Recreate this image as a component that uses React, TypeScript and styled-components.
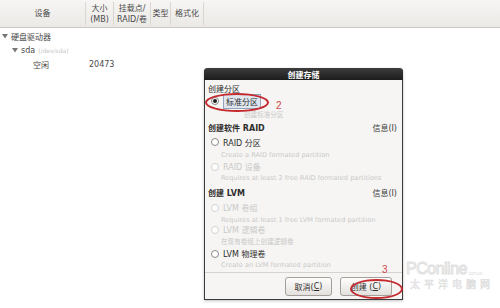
import React from "react";
import styled, { createGlobalStyle } from "styled-components";

const GlobalStyle = createGlobalStyle`
  html, body { margin: 0; padding: 0; background: #ffffff; }
  body { font-family: "DejaVu Sans", "Noto Sans CJK SC", sans-serif; }
`;

const FONT = `"DejaVu Sans", "Noto Sans CJK SC", sans-serif`;

const Page = styled.div`
  position: relative;
  width: 500px;
  height: 308px;
  overflow: hidden;
  background: #ffffff;
  font-family: ${FONT};
`;

const Header = styled.div`
  display: flex;
  height: 27px;
  background: linear-gradient(#f7f6f4, #ebe9e6);
  border-bottom: 1px solid #cbc8c4;
`;

const HeadCell = styled.div<{ $w?: number }>`
  ${(p) => (p.$w ? `width: ${p.$w}px;` : "flex: 1;")}
  display: flex;
  align-items: center;
  justify-content: center;
  text-align: center;
  font-size: 8px;
  line-height: 11px;
  color: #4a4a4a;
  border-right: ${(p) => (p.$w ? "1px solid #d9d6d2" : "none")};
  box-sizing: border-box;
  margin: 2px 0;
`;

const Tree = styled.div`
  display: flex;
  flex-direction: column;
  padding-top: 1px;
`;

const TreeRow = styled.div<{ $indent: number }>`
  display: flex;
  align-items: center;
  height: 14px;
  padding-left: ${(p) => p.$indent}px;
  font-size: 8px;
  color: #4a4a4a;
  gap: 3px;
`;

const Dim = styled.span`
  color: #c4c4c4;
  font-size: 6px;
`;

const Cell = styled.span<{ $w: number }>`
  display: inline-block;
  width: ${(p) => p.$w}px;
`;

const Arrow = () => (
  <svg width="6" height="5" viewBox="0 0 6 5">
    <path d="M0 0 L6 0 L3 4.5 Z" fill="#777" />
  </svg>
);

const Dialog = styled.div`
  position: absolute;
  left: 204px;
  top: 68px;
  width: 199px;
  height: 232px;
  box-sizing: border-box;
  display: flex;
  flex-direction: column;
  background: #f6f5f3;
  border: 1px solid #3a3a3a;
  border-top: none;
  border-radius: 4px 4px 0 0;
  box-shadow: 0 1px 3px rgba(0, 0, 0, 0.25);
`;

const TitleBar = styled.div`
  height: 12px;
  margin: 0 -1px;
  border-radius: 4px 4px 0 0;
  background: linear-gradient(#3d3d3d, #1c1c1c);
  color: #ffffff;
  font-weight: bold;
  font-size: 8px;
  display: flex;
  align-items: center;
  justify-content: center;
`;

const Body = styled.div`
  display: flex;
  flex-direction: column;
  padding: 2px 5px 0 3px;
`;

const Row = styled.div<{ $h: number; $indent?: number; $faint?: boolean; $bold?: boolean; $small?: boolean }>`
  display: flex;
  align-items: center;
  height: ${(p) => p.$h}px;
  padding-left: ${(p) => p.$indent ?? 0}px;
  font-size: ${(p) => (p.$small ? "6.6px" : "8px")};
  font-weight: ${(p) => (p.$bold ? "bold" : "normal")};
  color: ${(p) => (p.$faint ? "#c9c9c9" : "#2e2e2e")};
  white-space: nowrap;
  gap: 4px;
`;

const Info = styled.span`
  margin-left: auto;
  font-weight: normal;
  color: #3a3a3a;
`;

const Radio = styled.span<{ $checked?: boolean; $faint?: boolean }>`
  width: 6px;
  height: 6px;
  border-radius: 50%;
  border: 1px solid ${(p) => (p.$faint ? "#d2d2d2" : "#8a8a8a")};
  background: #ffffff;
  display: inline-flex;
  align-items: center;
  justify-content: center;
  flex: none;
  &::after {
    content: "";
    width: 4px;
    height: 4px;
    border-radius: 50%;
    background: ${(p) => (p.$checked ? "#1e1e1e" : "transparent")};
  }
`;

const Focus = styled.span`
  padding: 1px 2px;
  border: 1px solid #93a6bd;
  background: #dfe6ee;
`;

const Separator = styled.div`
  margin-top: 3px;
  height: 1px;
  background: #d6d3cf;
  margin-left: -3px;
  margin-right: -5px;
`;

const ButtonBar = styled.div`
  display: flex;
  justify-content: flex-end;
  gap: 8px;
  padding: 4px 5px 0 0;
`;

const Button = styled.div<{ $w: number }>`
  width: ${(p) => p.$w}px;
  height: 19px;
  box-sizing: border-box;
  border: 1px solid #a3a09c;
  border-radius: 3px;
  background: linear-gradient(#fdfdfc, #e4e1dd);
  font-size: 8px;
  color: #2e2e2e;
  display: flex;
  align-items: center;
  justify-content: center;
  u { text-decoration: underline; }
`;

const Ellipse = styled.div<{ $l: number; $t: number; $w: number; $h: number }>`
  position: absolute;
  left: ${(p) => p.$l}px;
  top: ${(p) => p.$t}px;
  width: ${(p) => p.$w}px;
  height: ${(p) => p.$h}px;
  box-sizing: border-box;
  border: 2px solid #c42a2f;
  border-radius: 50%;
  pointer-events: none;
`;

const Mark = styled.div<{ $l: number; $t: number }>`
  position: absolute;
  left: ${(p) => p.$l}px;
  top: ${(p) => p.$t}px;
  color: #d0484a;
  font-family: "Liberation Sans", sans-serif;
  font-size: 10px;
`;

const Watermark = styled.div`
  position: absolute;
  left: 406px;
  top: 260px;
  display: flex;
  flex-direction: column;
  align-items: flex-start;
  pointer-events: none;
`;

const WmLogo = styled.div`
  font-family: "Liberation Sans", sans-serif;
  font-size: 16px;
  letter-spacing: -0.5px;
  line-height: 17px;
  color: transparent;
  -webkit-text-stroke: 1px #e0e0e0;
  display: flex;
  align-items: flex-end;
  span {
    font-size: 5px;
    line-height: 7px;
    -webkit-text-stroke: 0;
    color: #dedede;
    margin-left: 1px;
  }
`;

const WmCn = styled.div`
  font-family: "Noto Sans CJK SC", sans-serif;
  font-size: 10px;
  line-height: 13px;
  letter-spacing: 4px;
  padding-left: 4px;
  color: transparent;
  -webkit-text-stroke: 0.6px #dddddd;
`;

export default function App() {
  return (
    <Page>
      <GlobalStyle />
      <Header>
        <HeadCell $w={86}>设备</HeadCell>
        <HeadCell $w={28}>
          大小
          <br />
          (MB)
        </HeadCell>
        <HeadCell $w={37}>
          挂载点/
          <br />
          RAID/卷
        </HeadCell>
        <HeadCell $w={20}>类型</HeadCell>
        <HeadCell $w={33}>格式化</HeadCell>
        <HeadCell />
      </Header>
      <Tree>
        <TreeRow $indent={2}>
          <Arrow />
          硬盘驱动器
        </TreeRow>
        <TreeRow $indent={12}>
          <Arrow />
          sda <Dim>(/dev/sda)</Dim>
        </TreeRow>
        <TreeRow $indent={33}>
          <Cell $w={53}>空闲</Cell>
          20473
        </TreeRow>
      </Tree>

      <Watermark>
        <WmLogo>
          PConline<span>.com.cn</span>
        </WmLogo>
        <WmCn>太平洋电脑网</WmCn>
      </Watermark>

      <Dialog>
        <TitleBar>创建存储</TitleBar>
        <Body>
          <Row $h={13}>创建分区</Row>
          <Row $h={12} $indent={3}>
            <Radio $checked />
            <Focus>标准分区</Focus>
          </Row>
          <Row $h={13} $indent={36} $faint $small>
            创建标准分区
          </Row>
          <Row $h={15} $bold>
            创建软件 RAID<Info>信息(I)</Info>
          </Row>
          <Row $h={14} $indent={3}>
            <Radio />
            RAID 分区
          </Row>
          <Row $h={12} $indent={13} $faint $small>
            Create a RAID formated partition
          </Row>
          <Row $h={11} $indent={3} $faint>
            <Radio $faint />
            RAID 设备
          </Row>
          <Row $h={12} $indent={13} $faint $small>
            Requires at least 2 free RAID formated partitions
          </Row>
          <Row $h={16} $bold>
            创建 LVM<Info>信息(I)</Info>
          </Row>
          <Row $h={15} $indent={3} $faint>
            <Radio $faint />
            LVM 卷组
          </Row>
          <Row $h={9} $indent={13} $faint $small>
            Requires at least 1 free LVM formated partition
          </Row>
          <Row $h={11} $indent={3} $faint>
            <Radio $faint />
            LVM 逻辑卷
          </Row>
          <Row $h={12} $indent={13} $faint $small>
            在现有卷组上创建逻辑卷
          </Row>
          <Row $h={13} $indent={3}>
            <Radio />
            LVM 物理卷
          </Row>
          <Row $h={9} $indent={13} $faint $small>
            Create an LVM formated partition
          </Row>
          <Separator />
          <ButtonBar>
            <Button $w={47}>
              取消(<u>C</u>)
            </Button>
            <Button $w={52}>
              创建 (<u>C</u>)
            </Button>
          </ButtonBar>
        </Body>
        <Ellipse $l={0} $t={25} $w={64} $h={19} />
        <Mark $l={71} $t={32}>2</Mark>
        <Ellipse $l={145} $t={211} $w={53} $h={20} />
        <Mark $l={177} $t={196}>3</Mark>
      </Dialog>
    </Page>
  );
}
